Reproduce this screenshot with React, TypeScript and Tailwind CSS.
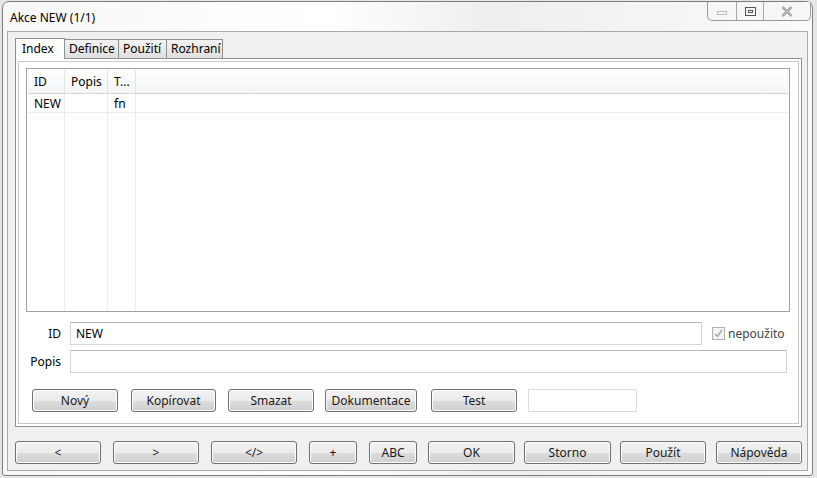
import React from "react";

const font = { fontFamily: '"Noto Sans", "Open Sans", sans-serif' };

function WinButton({ label, w }: { label: string; w: string }) {
    return (
        <button
            className={`${w} h-[23px] shrink-0 rounded-[3px] border border-[#707070] bg-[linear-gradient(#f2f2f2_0%,#ebebeb_50%,#dddddd_51%,#cfcfcf_100%)] text-[12px] font-normal leading-none text-[#1a1a1a] shadow-[inset_0_0_0_1px_#fcfcfc]`}
        >
            {label}
        </button>
    );
}

function TextBox({ w, value }: { w: string; value?: string }) {
    return (
        <div className={`${w} h-[23px] shrink-0 border border-[#d5d5d5] border-t-[#b8b8b8] bg-white px-[5px] text-[12px] leading-[21px] text-black`}>
            {value}
        </div>
    );
}

export default function App() {
    const cols = [
        { name: "ID", w: "w-[37px]", val: "NEW" },
        { name: "Popis", w: "w-[43px]", val: "" },
        { name: "T...", w: "w-[28px]", val: "fn" },
    ];

    return (
        <div className="w-[817px] h-[478px] overflow-hidden bg-[#e6e6e6] pt-[1px] pl-[2px]" style={font}>
            {/* Window */}
            <div className="w-[811px] h-[475px] rounded-t-[7px] rounded-b-[3px] border border-[#7d7d7d] bg-[linear-gradient(90deg,#f7f7f7,#ffffff_40%,#eeeeee_60%,#fafafa)] flex flex-col">
                {/* Title bar */}
                <div className="h-[29px] flex items-start shrink-0">
                    <div className="pl-[7px] pt-[7px] text-[12px] text-black">Akce NEW (1/1)</div>
                    <div className="ml-auto mr-[1px] flex h-[19px] rounded-b-[5px] border border-t-0 border-[#9a9a9a] bg-[#f6f6f6]">
                        <div className="w-[29px] flex items-center justify-center border-r border-[#a8a8a8]">
                            <div className="w-[10px] h-[4px] border border-[#bcbcbc] mt-[4px]" />
                        </div>
                        <div className="w-[27px] flex items-center justify-center border-r border-[#a8a8a8]">
                            <div className="w-[11px] h-[9px] border border-[#555] flex items-center justify-center">
                                <div className="w-[5px] h-[3px] border border-[#555]" />
                            </div>
                        </div>
                        <div className="w-[46px] flex items-center justify-center">
                            <svg width="12" height="11" viewBox="0 0 12 11">
                                <path d="M1.5 1 L10.5 10 M10.5 1 L1.5 10" stroke="#777" strokeWidth="2.2" fill="none" />
                                <path d="M1.5 1 L10.5 10 M10.5 1 L1.5 10" stroke="#fff" strokeWidth="0.8" fill="none" />
                            </svg>
                        </div>
                    </div>
                </div>

                {/* Client area */}
                <div className="mx-[4px] mb-[4px] flex-1 border border-[#a9a9a9] bg-[#f0f0f0] flex flex-col px-[7px] pt-[5px]">
                    {/* Tabs */}
                    <div className="flex items-end h-[21px]">
                        <div className="h-[21px] w-[50px] border border-b-0 border-[#8e8f8f] bg-white text-[12px] text-black pl-[6px] pt-[1px] relative z-10 -mb-[1px]">
                            Index
                        </div>
                        <div className="h-[19px] w-[54px] border border-l-0 border-b-0 border-[#8e8f8f] bg-[linear-gradient(#f2f2f2,#dfdfdf)] text-[12px] text-black pl-[4px] leading-[18px]">
                            Definice
                        </div>
                        <div className="h-[19px] w-[48px] border border-l-0 border-b-0 border-[#8e8f8f] bg-[linear-gradient(#f2f2f2,#dfdfdf)] text-[12px] text-black pl-[4px] leading-[18px]">
                            Použití
                        </div>
                        <div className="h-[19px] w-[56px] border border-l-0 border-b-0 border-[#8e8f8f] bg-[linear-gradient(#f2f2f2,#dfdfdf)] text-[12px] text-black pl-[4px] leading-[18px]">
                            Rozhraní
                        </div>
                    </div>

                    {/* Tab pane */}
                    <div className="w-[787px] h-[369px] border border-[#8e8f8f] bg-white p-[2px]">
                        <div className="h-full border border-[#c8c8c8] bg-white flex flex-col pl-[7px] pr-[8px] pt-[6px]">
                            {/* List */}
                            <div className="h-[244px] border border-[#a0a0a0] bg-white p-[1px] flex flex-col">
                                <div className="flex h-[24px] border-b border-[#d5d5d5] bg-[linear-gradient(#ffffff,#f3f4f6)] text-[12px] text-black">
                                    {cols.map((c) => (
                                        <div key={c.name} className={`${c.w} border-r border-[#e3e3e3] pl-[6px] pt-[3px]`}>
                                            {c.name}
                                        </div>
                                    ))}
                                </div>
                                <div className="flex h-[19px] border-b border-[#ececec] text-[12px] text-black">
                                    {cols.map((c) => (
                                        <div key={c.name} className={`${c.w} border-r border-[#ececec] pl-[6px] leading-[19px]`}>
                                            {c.val}
                                        </div>
                                    ))}
                                </div>
                                <div className="flex flex-1">
                                    {cols.map((c) => (
                                        <div key={c.name} className={`${c.w} border-r border-[#ececec]`} />
                                    ))}
                                </div>
                            </div>

                            {/* ID row */}
                            <div className="flex items-center mt-[10px] h-[23px]">
                                <div className="w-[35px] text-right text-[12px] text-black">ID</div>
                                <div className="ml-[9px]" />
                                <TextBox w="w-[632px]" value="NEW" />
                                <div className="ml-[10px] flex items-center">
                                    <div className="w-[13px] h-[13px] border border-[#b1b1b1] bg-[#f4f4f4] flex items-center justify-center">
                                        <svg width="9" height="9" viewBox="0 0 9 9">
                                            <path d="M1 5 L3.5 7.5 L8 1" stroke="#a3a3a3" strokeWidth="1.4" fill="none" />
                                        </svg>
                                    </div>
                                    <span className="ml-[3px] text-[12px] text-[#444]">nepoužito</span>
                                </div>
                            </div>

                            {/* Popis row */}
                            <div className="flex items-center mt-[5px] h-[23px]">
                                <div className="w-[35px] text-right text-[12px] text-black">Popis</div>
                                <div className="ml-[9px]" />
                                <TextBox w="w-[717px]" />
                            </div>

                            {/* Buttons row */}
                            <div className="flex items-center mt-[16px] pl-[6px]">
                                <WinButton label="Nový" w="w-[86px]" />
                                <div className="ml-[13px]" />
                                <WinButton label="Kopírovat" w="w-[85px]" />
                                <div className="ml-[12px]" />
                                <WinButton label="Smazat" w="w-[86px]" />
                                <div className="ml-[11px]" />
                                <WinButton label="Dokumentace" w="w-[92px]" />
                                <div className="ml-[14px]" />
                                <WinButton label="Test" w="w-[86px]" />
                                <div className="ml-[11px]" />
                                <TextBox w="w-[109px] h-[22px] border-[#dcdcdc] border-t-[#dcdcdc]" />
                            </div>
                        </div>
                    </div>

                    {/* Bottom buttons */}
                    <div className="flex items-center mt-[14px]">
                        <WinButton label="<" w="w-[86px]" />
                        <div className="ml-[12px]" />
                        <WinButton label=">" w="w-[86px]" />
                        <div className="ml-[12px]" />
                        <WinButton label="</>" w="w-[86px]" />
                        <div className="ml-[12px]" />
                        <WinButton label="+" w="w-[48px]" />
                        <div className="ml-[12px]" />
                        <WinButton label="ABC" w="w-[48px]" />
                        <div className="ml-[11px]" />
                        <WinButton label="OK" w="w-[87px]" />
                        <div className="ml-[9px]" />
                        <WinButton label="Storno" w="w-[87px]" />
                        <div className="ml-[9px]" />
                        <WinButton label="Použít" w="w-[86px]" />
                        <div className="ml-[10px]" />
                        <WinButton label="Nápověda" w="w-[86px]" />
                    </div>
                </div>
            </div>
        </div>
    );
}
